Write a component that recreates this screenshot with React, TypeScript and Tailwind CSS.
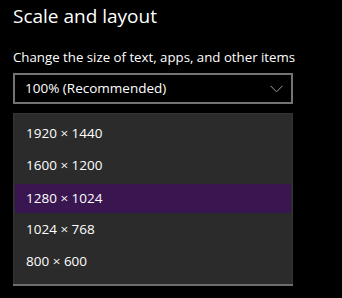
import React from 'react';

const options = ['1920 × 1440', '1600 × 1200', '1280 × 1024', '1024 × 768', '800 × 600'];
const selected = '1280 × 1024';

export default function App() {
  return (
    <div
      className="w-[342px] h-[298px] bg-black text-white overflow-hidden"
      style={{ fontFamily: '"Open Sans", "Noto Sans", sans-serif' }}
    >
      <div className="pl-[13px] pt-[2px]">
        <h1 className="text-[19px] leading-[28px] font-normal text-white">Scale and layout</h1>
        <p className="mt-[17px] text-[13.25px] leading-[20px] text-white">
          Change the size of text, apps, and other items
        </p>

        {/* combo box */}
        <div className="mt-[6px] w-[280px] h-[31px] border-2 border-[#737373] flex items-center justify-between pl-[10px] pr-[8px]">
          <span className="text-[13.5px] leading-none">100% (Recommended)</span>
          <svg width="13" height="8" viewBox="0 0 13 8">
            <path d="M0.5 0.8 L6.5 6.8 L12.5 0.8" fill="none" stroke="#a0a0a0" strokeWidth="1" />
          </svg>
        </div>

        {/* open list */}
        <div className="mt-[9px] w-[280px] bg-[#2b2b2b] border border-[#353535] border-b-0 pt-[3px] pb-[7px]">
          {options.map((o) =>
            o === selected ? (
              <div
                key={o}
                className="mt-[3px] mx-[1px] h-[29px] bg-[#3a1650] flex items-center pl-[11px] text-[13.5px]"
              >
                {o}
              </div>
            ) : (
              <div key={o} className="h-[32px] flex items-center pl-[12px] text-[13.5px]">
                {o}
              </div>
            )
          )}
        </div>
        <div className="w-[280px] h-[2px] bg-[#6e6e6e]" />
      </div>
    </div>
  );
}
